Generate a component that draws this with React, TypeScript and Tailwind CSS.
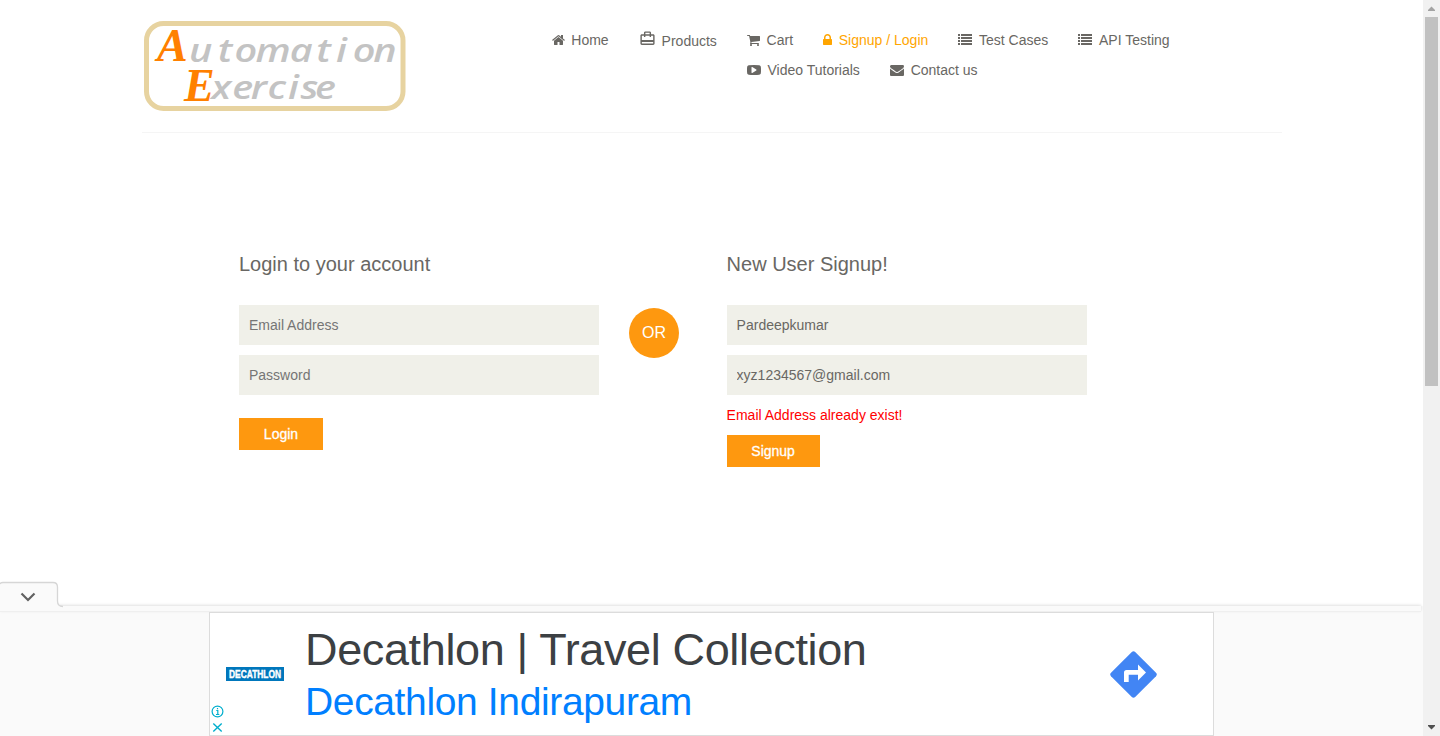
import type { ReactNode } from "react";
import { MdCardTravel } from "react-icons/md";

const paths = {
  home: "M1472 992v480q0 26-19 45t-45 19h-384v-384h-256v384h-384q-26 0-45-19t-19-45v-480q0-1 .5-3t.5-3l575-474 575 474q1 2 1 6zm223-69l-62 74q-8 9-21 11h-3q-13 0-21-7l-692-577-692 577q-12 8-24 7-13-2-21-11l-62-74q-8-10-7-23.5t11-21.5l719-599q32-26 76-26t76 26l244 204v-195q0-14 9-23t23-9h192q14 0 23 9t9 23v408l219 182q10 8 11 21.5t-7 23.5z",
  cart: "M704 1536q0 52-38 90t-90 38-90-38-38-90 38-90 90-38 90 38 38 90zm896 0q0 52-38 90t-90 38-90-38-38-90 38-90 90-38 90 38 38 90zm128-1088v512q0 24-16.5 42.5t-40.5 21.5l-1044 122q13 60 13 70 0 16-24 64h920q26 0 45 19t19 45-19 45-45 19h-1024q-26 0-45-19t-19-45q0-11 8-31.5t16-36 21.5-40 15.5-29.5l-177-823h-204q-26 0-45-19t-19-45 19-45 45-19h256q16 0 28.5 6.5t19.5 15.5 13 24.5 8 26 5.5 29.5 4.5 26h1201q26 0 45 19t19 45z",
  lock: "M640 768h512v-192q0-106-75-181t-181-75-181 75-75 181v192zm832 96v576q0 40-28 68t-68 28h-960q-40 0-68-28t-28-68v-576q0-40 28-68t68-28h32v-192q0-184 132-316t316-132 316 132 132 316v192h32q40 0 68 28t28 68z",
  list: "M0 128h256v256h-256zM384 128h1408v256h-1408zM0 512h256v256h-256zM384 512h1408v256h-1408zM0 896h256v256h-256zM384 896h1408v256h-1408zM0 1280h256v256h-256zM384 1280h1408v256h-1408z",
  video: "M1216 896q0 37-30 54l-512 320q-31 20-65 2-33-18-33-56v-640q0-38 33-56 34-18 65 2l512 320q30 17 30 54zM1792 896q0-96-1-150t-8.500-136.500-22.500-147.500q-16-73-69-123t-124-58q-222-25-671-25t-671 25q-71 8-124.500 58t-69.500 123q-14 65-21.500 147.500t-8.500 136.500-1 150 1 150 8.500 136.500 22.500 147.500q16 73 69 123t124 58q222 25 671 25t671-25q71-8 124.500-58t69.500-123q14-65 21.500-147.500t8.500-136.500 1-150z",
  mail: "M1792 710v794q0 66-47 113t-113 47h-1472q-66 0-113-47t-47-113v-794q44 49 101 87 362 246 497 345 57 42 92.5 65.5t94.5 48 110 24.5h2q51 0 110-24.5t94.5-48 92.5-65.5q170-123 498-345 57-39 100-87zm0-294q0 79-49 151t-122 123q-376 261-468 325-10 7-42.5 31t-54 38.5-52 32.5-57.5 27-50 9h-2q-23 0-50-9t-57.5-27-52-32.5-54-38.5-42.5-31q-91-64-262-182.5t-205-142.5q-62-42-117-115.5t-55-136.5q0-78 41.5-130t118.5-52h1472q65 0 112.5 47t47.5 113z",
};

function Icon({ name, x = 0, w = 1792 }: { name: keyof typeof paths; x?: number; w?: number }) {
  return (
    <svg width={w / 128} height="14" viewBox={`${x} 0 ${w} 1792`} fill="currentColor" fillRule="evenodd" className="shrink-0">
      <path d={paths[name]} />
    </svg>
  );
}

function NavItem({ icon, children, active }: { icon: ReactNode; children: ReactNode; active?: boolean }) {
  return (
    <a className={active ? "flex h-5 items-center gap-[6.8px] text-[#ffa500]" : "flex h-5 items-center gap-[6.8px]"}>
      {icon}
      <span className="whitespace-nowrap">{children}</span>
    </a>
  );
}

function Logo() {
  return (
    <svg width="262" height="91" viewBox="144 21 262 91" className="shrink-0" fontStyle="italic" fontFamily="'Open Sans', 'Noto Sans', sans-serif" fontWeight="600">
      <rect x="146.500" y="23.500" width="256.500" height="85" rx="17" fill="#fff" stroke="#e7d3a0" strokeWidth="5" />
      <text x="157" y="61" fontSize="46" fontFamily="'Liberation Serif', serif" fontWeight="700" fill="#ff8000">A</text>
      <text transform="translate(0 62) scale(1.2 1)" fontSize="33" fill="#c3c3c3" x="157.500 181.500 195.500 213 241.500 263.500 280 294 311">utomation</text>
      <text x="184" y="101" fontSize="46" fontFamily="'Liberation Serif', serif" fontWeight="700" fill="#ff8000">E</text>
      <text transform="translate(0 99) scale(1.2 1)" fontSize="33" fill="#c3c3c3" x="176 193.500 209 223 240 250.500 262.500">xercise</text>
    </svg>
  );
}

const field = "block h-10 w-[360px] bg-[#f0f0e9] px-2.5 text-[14px] text-[#696763] outline-none placeholder:text-[#757575]";

export default function App() {
  return (
    <div className="flex h-[736px] w-[1440px] overflow-hidden bg-white font-['Liberation_Sans',Arial,sans-serif] text-[14px] leading-5 text-[#696763]">
      <div className="flex w-[1423px] flex-col">
        <header className="mx-auto flex h-[133px] w-[1140px] shrink-0 items-start border-b border-[#f5f5f5] pl-0.5 pt-[21px]">
          <Logo />
          <nav className="ml-[146px] flex flex-col gap-2.5 pt-[9px]">
            <div className="flex gap-[29.950px]">
              <NavItem icon={<Icon name="home" x={64} w={1664} />}>Home</NavItem>
              <a className="flex h-5 items-center">
                <MdCardTravel size={17} className="mb-1" />
                <span className="ml-[6px] mt-0.5">Products</span>
              </a>
              <NavItem icon={<Icon name="cart" x={64} w={1664} />}>Cart</NavItem>
              <NavItem active icon={<Icon name="lock" x={320} w={1152} />}>Signup / Login</NavItem>
              <NavItem icon={<Icon name="list" />}>Test Cases</NavItem>
              <NavItem icon={<Icon name="list" />}>API Testing</NavItem>
            </div>
            <div className="flex gap-[30px] pl-[195.200px]">
              <NavItem icon={<Icon name="video" />}>Video Tutorials</NavItem>
              <NavItem icon={<Icon name="mail" />}>Contact us</NavItem>
            </div>
          </nav>
        </header>

        <main className="flex h-[473px] shrink-0 items-start pl-[239px] pt-[120px]">
          <form className="w-[360px]">
            <h2 className="mb-[30px] text-[20px] leading-[22px]">Login to your account</h2>
            <input className={field} placeholder="Email Address" />
            <input className={`${field} mt-2.5`} placeholder="Password" />
            <button type="button" className="mt-[23px] h-8 w-[84px] bg-[#fe980f] text-white [-webkit-text-stroke:0.3px]">Login</button>
          </form>
          <div className="ml-[30px] mt-[55px] flex size-[50px] items-center justify-center rounded-full bg-[#fe980f] text-[16px] text-white">OR</div>
          <form className="ml-[47.600px] w-[360px]">
            <h2 className="mb-[30px] text-[20px] leading-[22px]">New User Signup!</h2>
            <input className={field} defaultValue="Pardeepkumar" />
            <input className={`${field} mt-2.5`} defaultValue="xyz1234567@gmail.com" />
            <p className="mt-2.5 text-[#ff0000]">Email Address already exist!</p>
            <button type="button" className="mt-2.5 h-8 w-[93px] bg-[#fe980f] text-white [-webkit-text-stroke:0.3px]">Signup</button>
          </form>
        </main>

        <aside className="relative flex h-[130px] flex-col bg-[#fafafa]">
          <svg width="66" height="27" viewBox="0 0 66 27" className="absolute -top-[25px] left-0 z-10">
            <path d="M0 1.500H53Q57.500 1.500 57.500 6V20Q57.500 25.500 63 25.500V27H0Z" fill="#fafafa" />
            <path d="M0 3Q0.500 1.500 3 1.500H53Q57.500 1.500 57.500 6V20Q57.500 25.500 63 25.500" fill="none" stroke="#d6d6d6" strokeWidth="1.300" />
            <path d="M21.500 12.500L28 19L34.500 12.500" fill="none" stroke="#616161" strokeWidth="2.200" />
          </svg>
          <div className="h-[6px] w-[1421px] shrink-0 border-b border-[#efefef] shadow-[0_-1px_3px_rgba(0,0,0,0.12)]" />
          <div className="ml-[209px] flex h-[124px] w-[1005px] border border-[#dcdcdc] bg-white">
            <div className="flex w-[95px] shrink-0 flex-col">
              <svg width="58" height="14" viewBox="0 0 58 14" className="ml-4 mt-[54px]">
                <rect width="58" height="14" fill="#0077bc" />
                <text x="3" y="10.600" textLength="52" lengthAdjust="spacingAndGlyphs" fontSize="10" fontWeight="700" fill="#fff" stroke="#fff" strokeWidth="0.400">DECATHLON</text>
              </svg>
              <svg width="14" height="30" viewBox="0 0 14 30" className="mt-[24px] ml-px" fill="none" stroke="#00aecd" strokeWidth="1.200">
                <circle cx="6.500" cy="6.500" r="5.400" />
                <path d="M5.300 5.500H6.800V9.500M5 9.500H8.300M6.500 3V4.300" />
                <path d="M2.300 18.500L10.700 26.500M10.700 18.500L2.300 26.500" strokeWidth="1.400" />
              </svg>
            </div>
            <div className="w-[805px] whitespace-nowrap">
              <div className="mt-3 text-[45px] leading-[50px] tracking-[-0.36px] text-[#3c4043]">Decathlon | Travel Collection</div>
              <div className="mt-[3px] text-[39px] leading-[48px] tracking-[-0.36px] text-[#007fff]">Decathlon Indirapuram</div>
            </div>
            <svg width="47" height="47" viewBox="0 0 47 47" className="mt-[38px]">
              <path d="M21.800 1Q23.500 -0.600 25.200 1L46 21.800Q47.600 23.500 46 25.200L25.200 46Q23.500 47.600 21.800 46L1 25.200Q-0.600 23.500 1 21.800Z" fill="#4285f4" />
              <path d="M14 31V21.500Q14 19 16.500 19H28V13.500L36 21.500L28 29.500V23.700H18.700V31Z" fill="#fff" />
            </svg>
          </div>
        </aside>
      </div>
      <div className="flex w-[17px] flex-col items-center bg-[#f1f1f1]">
        <svg width="17" height="17" viewBox="0 0 17 17" fill="#a3a3a3"><path d="M5 11V10L8.500 6.500L12 10V11Z" /></svg>
        <div className="h-[369px] w-[13px] bg-[#c1c1c1]" />
        <svg width="17" height="17" viewBox="0 0 17 17" fill="#505050" className="mt-auto"><path d="M5 6V7L8.500 10.500L12 7V6Z" /></svg>
      </div>
    </div>
  );
}
